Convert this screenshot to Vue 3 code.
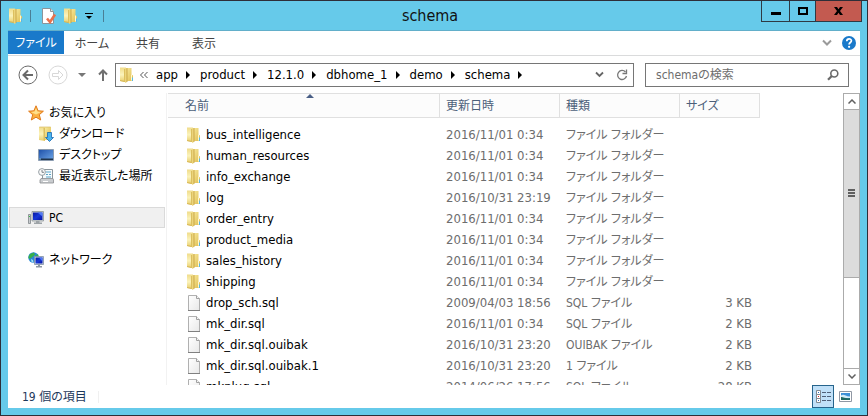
<script setup>
import { ref } from 'vue'

const search = ref('')
const path = ['app', 'product', '12.1.0', 'dbhome_1', 'demo', 'schema']
const tabs = ['ホーム', '共有', '表示']

const favorites = [
  { name: 'ダウンロード', icon: 'download' },
  { name: 'デスクトップ', icon: 'desktop' },
  { name: '最近表示した場所', icon: 'recent' }
]

const folder = 'ファイル フォルダー'
const files = [
  { name: 'bus_intelligence', date: '2016/11/01 0:34', type: folder, size: '' },
  { name: 'human_resources', date: '2016/11/01 0:34', type: folder, size: '' },
  { name: 'info_exchange', date: '2016/11/01 0:34', type: folder, size: '' },
  { name: 'log', date: '2016/10/31 23:19', type: folder, size: '' },
  { name: 'order_entry', date: '2016/11/01 0:34', type: folder, size: '' },
  { name: 'product_media', date: '2016/11/01 0:34', type: folder, size: '' },
  { name: 'sales_history', date: '2016/11/01 0:34', type: folder, size: '' },
  { name: 'shipping', date: '2016/11/01 0:34', type: folder, size: '' },
  { name: 'drop_sch.sql', date: '2009/04/03 18:56', type: 'SQL ファイル', size: '3 KB' },
  { name: 'mk_dir.sql', date: '2016/11/01 0:34', type: 'SQL ファイル', size: '2 KB' },
  { name: 'mk_dir.sql.ouibak', date: '2016/10/31 23:20', type: 'OUIBAK ファイル', size: '2 KB' },
  { name: 'mk_dir.sql.ouibak.1', date: '2016/10/31 23:20', type: '1 ファイル', size: '2 KB' },
  { name: 'mkplug.sql', date: '2014/06/26 17:56', type: 'SQL ファイル', size: '28 KB' }
]
</script>

<template>
  <svg class="sprite" width="0" height="0" aria-hidden="true">
    <defs>
      <linearGradient id="gold-back" x1="0" y1="0" x2="0" y2="1">
        <stop offset="0" stop-color="#f0dc8a" />
        <stop offset="0.5" stop-color="#fbf3bc" />
        <stop offset="1" stop-color="#e8cd6a" />
      </linearGradient>
      <linearGradient id="gold-front" x1="0" y1="0" x2="1" y2="1">
        <stop offset="0" stop-color="#f7e99c" />
        <stop offset="1" stop-color="#dfbd50" />
      </linearGradient>
      <linearGradient id="paper" x1="0" y1="0" x2="1" y2="1">
        <stop offset="0" stop-color="#ffffff" />
        <stop offset="1" stop-color="#e8e8e8" />
      </linearGradient>
      <linearGradient id="screen" x1="0" y1="0" x2="1" y2="1">
        <stop offset="0" stop-color="#1d4fa8" />
        <stop offset="1" stop-color="#70a8e8" />
      </linearGradient>
      <linearGradient id="screen-dark" x1="0" y1="0" x2="1" y2="1">
        <stop offset="0" stop-color="#0818a0" />
        <stop offset="0.5" stop-color="#1838d8" />
        <stop offset="1" stop-color="#0410a0" />
      </linearGradient>
    </defs>
    <symbol id="folder" viewBox="0 0 16 16">
      <path d="M1 .5h6V15l-6-1z" fill="url(#gold-back)" />
      <path d="M7 1h5.500v6.500l1.500 1V14H7z" fill="url(#gold-front)" />
      <path d="M1 13.200l5 .8v1l-5-1z" fill="#d2b04c" />
      <path d="M5 2h1v13l-1-.5z" fill="#dcc060" />
      <path d="M6 1.500h2V15l-2 1z" fill="#ecd57c" />
      <path d="M8 1v14" stroke="#c39d3a" stroke-width=".8" />
      <path d="M12 7.500h1v6h-1z" fill="#fff8d0" />
      <path d="M13 10.500h1V14h-1z" fill="#56b8e8" />
    </symbol>
    <symbol id="file" viewBox="0 0 16 16">
      <path d="M2.500.5h8l3 3v12h-11z" fill="url(#paper)" stroke="#b0b0b0" />
      <path d="M10.500.5v3h3" fill="#f4f4f4" stroke="#a0a0a0" />
      <path d="M2 15.500h12" stroke="#808080" />
    </symbol>
    <symbol id="star" viewBox="0 0 16 16">
      <path d="M8 .8l2.100 5 5.300.4-4.100 3.500 1.400 5.300L8 12.200 3.300 15l1.400-5.300L.6 6.200l5.300-.4z" fill="#fbb040" stroke="#e07a1c" />
      <path d="M8 3l1.400 3.600L13 7 8 9.500 3 7l3.600-.4z" fill="#ffe08a" />
    </symbol>
    <symbol id="download" viewBox="0 0 16 16">
      <path d="M1 1h6v14l-6-1z" fill="url(#gold-back)" />
      <path d="M7 1h6v13H7z" fill="url(#gold-front)" />
      <path d="M5.500 2h1.500v13l-1.500-1z" fill="#dcc060" />
      <path d="M1.300 1h11.400" stroke="#d3b355" stroke-width=".6" />
      <path d="M9.500 6.500h4v5h2l-4 4-4-4h2z" fill="#48b4f0" stroke="#1868b0" stroke-width=".8" />
    </symbol>
    <symbol id="desktop" viewBox="0 0 16 16">
      <path d="M.5 2.500h15v11H.5z" fill="url(#screen)" stroke="#8c9cb0" />
      <path d="M1 11.500h14v1.500H1z" fill="#20344c" />
      <path d="M1 12h2" stroke="#88c8f0" />
    </symbol>
    <symbol id="recent" viewBox="0 0 16 16">
      <path d="M4.500 1.500h10v10h-10z" fill="#f6fafc" stroke="#8c969c" />
      <path d="M8 4h5M8 6.500h2M11 6.500h2M8 9h5" stroke="#58a4c8" />
      <path d="M2 12l1-1.500h12l.5 1.500v3H2z" fill="#c9cccf" stroke="#8a8d90" stroke-width=".8" />
      <path d="M5 13.500h5" stroke="#fff" />
      <circle cx="4" cy="4" r="3.400" fill="#fafafa" stroke="#8a949a" stroke-width=".9" />
      <path d="M4 2v2.300h2" fill="none" stroke="#60686e" stroke-width=".8" />
    </symbol>
    <symbol id="pc" viewBox="0 0 16 16">
      <path d="M.5 4.500h2v9h-2z" fill="#c8cccf" stroke="#7f8589" stroke-width=".8" />
      <path d="M1 6.500h1" stroke="#30c040" />
      <path d="M4 1.500h11.500v9.500H4z" fill="#d5d9dc" stroke="#8d9498" stroke-width=".8" />
      <path d="M5 2.500h9.500v7.500H5z" fill="url(#screen-dark)" />
      <path d="M9.500 2.500h5v4z" fill="#5078f0" />
      <path d="M8 11h3.500v1.500H14V14H6v-1.500h2z" fill="#9da3a7" />
    </symbol>
    <symbol id="network" viewBox="0 0 16 16">
      <circle cx="5.500" cy="5.500" r="5.200" fill="#2888d8" />
      <path d="M2 2l4-1.500 1 2-2 2-2 1.500L1 7 .4 5zM7 4l3-2 .8 3-2.800 2z" fill="#38b048" />
      <path d="M3 7l2 1 .5 2.500-2-.8z" fill="#a8e0f0" />
      <path d="M6.500 4.500h9v8h-9z" fill="#d5dce4" stroke="#8090a4" stroke-width=".8" />
      <path d="M7.500 5.500h7v6h-7z" fill="url(#screen-dark)" />
      <path d="M11 5.500h3.500v4z" fill="#5078f0" />
      <path d="M10 12.500h2v1.500h2v1.500H8V14h2z" fill="#8c98a4" />
    </symbol>
    <symbol id="properties" viewBox="0 0 16 16">
      <path d="M1.500.5h8l3 3v12h-11z" fill="#fff" stroke="#8c9499" />
      <path d="M9.500.5v3h3" fill="#e4e8ea" stroke="#8c9499" />
      <path d="M6 10.500l3 3.500 5-7.500" fill="none" stroke="#e8714c" stroke-width="2.600" />
    </symbol>
  </svg>

  <div class="window">
    <header class="title-bar">
      <div class="quick">
        <svg class="icon"><use href="#folder" /></svg>
        <span class="bar"></span>
        <button type="button" aria-label="プロパティ"><svg class="icon"><use href="#properties" /></svg></button>
        <button type="button" aria-label="新しいフォルダー"><svg class="icon"><use href="#folder" /></svg></button>
        <button type="button" aria-label="カスタマイズ">
          <svg width="8" height="6" viewBox="0 0 8 6"><path d="M0 0h8v1H0zM1 3h6L4 6z" fill="#000" /></svg>
        </button>
        <span class="bar"></span>
      </div>
      <h1>schema</h1>
      <div class="controls">
        <button type="button" class="minimize" aria-label="最小化">
          <svg width="10" height="9" viewBox="0 0 10 9"><path d="M0 5h10v3H0z" /></svg>
        </button>
        <button type="button" class="maximize" aria-label="最大化">
          <svg width="10" height="8" viewBox="0 0 10 8"><path d="M0 0h10v8H0zM2 2v4h6V2z" fill-rule="evenodd" /></svg>
        </button>
        <button type="button" class="close" aria-label="閉じる">
          <svg width="9" height="8" viewBox="0 0 9 8"><path d="M0 0h3l1.500 2.200L6 0h3L6 4l3 4H6L4.500 5.800 3 8H0l3-4z" /></svg>
        </button>
      </div>
    </header>

    <main class="content">
      <nav class="ribbon">
        <button type="button" class="tab active">ファイル</button>
        <button v-for="tab in tabs" :key="tab" type="button" class="tab">{{ tab }}</button>
        <div class="ribbon-end">
          <button type="button" aria-label="リボンの展開">
            <svg width="10" height="8" viewBox="0 0 10 8"><path d="M1 1.500l4 4 4-4" fill="none" stroke="#9a9a9a" stroke-width="2" /></svg>
          </button>
          <button type="button" aria-label="ヘルプ">
            <svg width="14" height="14" viewBox="0 0 14 14">
              <circle cx="7" cy="7" r="7" fill="#1979ca" />
              <path d="M4.800 5.200c0-3 4.600-3 4.600-.4 0 1.700-2.300 1.700-2.300 3.700" fill="none" stroke="#fff" stroke-width="1.700" />
              <circle cx="7.100" cy="10.800" r="1.100" fill="#fff" />
            </svg>
          </button>
        </div>
      </nav>

      <div class="nav-bar">
        <div class="history">
          <button type="button" aria-label="戻る">
            <svg width="20" height="20" viewBox="0 0 20 20" fill="none" stroke="#6a6a6a">
              <circle cx="10" cy="10" r="9" />
              <path d="M15 10H6M10 5.500L5.500 10l4.500 4.500" stroke-width="2" />
            </svg>
          </button>
          <button type="button" class="forward" aria-label="進む">
            <svg width="20" height="20" viewBox="0 0 20 20" fill="none" stroke="#d8d8d8">
              <circle cx="10" cy="10" r="9" />
              <path d="M4.500 8.500h6v-3l4.500 4.500-4.500 4.500v-3h-6z" />
            </svg>
          </button>
          <button type="button" aria-label="最近の場所">
            <svg width="8" height="4" viewBox="0 0 8 4"><path d="M0 0h8L4 4z" fill="#777" /></svg>
          </button>
          <button type="button" class="up" aria-label="上へ">
            <svg width="10" height="12" viewBox="0 0 10 12"><path d="M5 12V2M1 5.500l4-4 4 4" fill="none" stroke="#707070" stroke-width="2" /></svg>
          </button>
        </div>
        <div class="address">
          <svg class="icon"><use href="#folder" /></svg>
          <svg class="overflow" width="8" height="6" viewBox="0 0 8 6"><path d="M3.500 0l-3 3 3 3M7.500 0l-3 3 3 3" fill="none" stroke="#555" /></svg>
          <template v-for="part in path" :key="part">
            <a href="#">{{ part }}</a>
            <svg class="arrow" width="4" height="8" viewBox="0 0 4 8"><path d="M0 0l4 4-4 4z" /></svg>
          </template>
          <div class="address-end">
            <button type="button" aria-label="以前の場所">
              <svg width="9" height="7" viewBox="0 0 9 7"><path d="M1 1.500L4.500 5 8 1.500" fill="none" stroke="#666" stroke-width="1.800" /></svg>
            </button>
            <button type="button" aria-label="最新の情報に更新">
              <svg width="12" height="12" viewBox="0 0 12 12">
                <path d="M9.500 3A4.500 4.500 0 1 0 10.500 7" fill="none" stroke="#777" stroke-width="1.300" />
                <path d="M6.500 4.500h4V.5" fill="none" stroke="#777" stroke-width="1.300" />
              </svg>
            </button>
          </div>
        </div>
        <label class="search">
          <input v-model="search" type="search" placeholder="schemaの検索" aria-label="schemaの検索" />
          <svg width="12" height="12" viewBox="0 0 12 12" fill="none" stroke="#6a6a6a">
            <circle cx="7.300" cy="4.500" r="3.500" stroke-width="1.600" />
            <path d="M4.800 7L1 10.800" stroke-width="2.200" />
          </svg>
        </label>
      </div>

      <div class="panes">
        <aside class="sidebar">
          <a href="#" class="place"><svg class="icon"><use href="#star" /></svg>お気に入り</a>
          <a v-for="item in favorites" :key="item.name" href="#" class="place child">
            <svg class="icon"><use :href="'#' + item.icon" /></svg>{{ item.name }}
          </a>
          <a href="#" class="place root selected"><svg class="icon"><use href="#pc" /></svg>PC</a>
          <a href="#" class="place root"><svg class="icon"><use href="#network" /></svg>ネットワーク</a>
        </aside>

        <div class="list">
          <table>
            <thead>
              <tr>
                <th class="col-name">
                  名前
                  <svg class="sort" width="8" height="4" viewBox="0 0 8 4"><path d="M4 0l4 4H0z" fill="#4a5f86" /></svg>
                </th>
                <th class="col-date">更新日時</th>
                <th class="col-type">種類</th>
                <th class="col-size">サイズ</th>
              </tr>
            </thead>
            <tbody>
              <tr v-for="file in files" :key="file.name">
                <td>
                  <div class="file-name">
                    <svg class="icon"><use :href="file.size ? '#file' : '#folder'" /></svg>
                    {{ file.name }}
                  </div>
                </td>
                <td>{{ file.date }}</td>
                <td class="type">{{ file.type }}</td>
                <td class="size">{{ file.size }}</td>
              </tr>
            </tbody>
          </table>
        </div>

        <div class="scrollbar">
          <button type="button" aria-label="上にスクロール">
            <svg width="8" height="5" viewBox="0 0 8 5"><path d="M.5 4.500L4 1l3.500 3.500" fill="none" stroke="#606060" stroke-width="1.500" /></svg>
          </button>
          <div class="track"><div class="thumb"><i></i><i></i><i></i></div></div>
          <button type="button" aria-label="下にスクロール">
            <svg width="8" height="5" viewBox="0 0 8 5"><path d="M.5.5L4 4 7.500.5" fill="none" stroke="#606060" stroke-width="1.500" /></svg>
          </button>
        </div>
      </div>

      <footer class="status">
        <span class="count">19 個の項目</span>
        <div class="views">
          <button type="button" class="view current" aria-label="詳細">
            <svg width="15" height="13" viewBox="0 0 15 13">
              <path d="M.5.5h4v4h-4zM.5 4.500h4v4h-4zM.5 8.500h4v4h-4z" fill="#fff" stroke="#808890" />
              <path d="M2 2h1v1H2z" fill="#3070c0" />
              <path d="M2 6h1v1H2z" fill="#e02020" />
              <path d="M2 10h1v1H2z" fill="#3070c0" />
              <path d="M6 2.500h4M11 2.500h4M6 6.500h4M11 6.500h4M6 10.500h4M11 10.500h4" stroke="#506078" />
            </svg>
          </button>
          <button type="button" class="view" aria-label="大アイコン">
            <svg width="13" height="11" viewBox="0 0 13 11">
              <path d="M.5.5h12v10H.5z" fill="#fff" stroke="#9098a4" />
              <path d="M2 2h9v7H2z" fill="#3c90d8" />
              <path d="M2 4.500c3-2 4 1 9 1V7H2z" fill="#d4ecf8" />
              <path d="M2 6c3 0 5 2 9 1v2H2z" fill="#206860" />
            </svg>
          </button>
        </div>
      </footer>
    </main>
  </div>
</template>

<style>
body {
  margin: 0;
}
</style>

<style scoped>
.sprite {
  position: absolute;
}

.window {
  box-sizing: border-box;
  height: 100vh;
  display: flex;
  flex-direction: column;
  padding: 0 7px 7px;
  border: 1px solid #2e2e38;
  background: #66caea;
  font-family: 'DejaVu Sans Condensed', 'Noto Sans', 'Noto Sans CJK JP', sans-serif;
  font-size: 13px;
  line-height: 20px;
  color: #000;
  font-feature-settings: 'palt';
}

button {
  display: flex;
  align-items: center;
  justify-content: center;
  padding: 0;
  border: 0;
  background: none;
  font: inherit;
  color: inherit;
}

a {
  color: inherit;
  text-decoration: none;
}

.icon {
  width: 16px;
  height: 16px;
  flex: none;
}

/* title bar */
.title-bar {
  box-sizing: border-box;
  display: grid;
  grid-template-columns: 1fr auto 1fr;
  height: 30px;
  flex: none;
  border-bottom: 1px solid #62afca;
}

.quick {
  display: flex;
  align-items: center;
  gap: 6px;
}

.quick .bar {
  width: 1px;
  height: 12px;
  margin: 0 4px 0 0;
  background: #4a7f96;
}

.quick .icon {
  display: block;
}

.quick .bar:last-child {
  margin-left: 4px;
}

h1 {
  margin: 0;
  padding-right: 8px;
  font-size: 16px;
  font-weight: normal;
  line-height: 30px;
  color: #111;
}

.controls {
  display: flex;
  justify-self: end;
  height: 20px;
  border: 1px solid #2e3a44;
  border-top: 0;
  margin-right: -2px;
}

.controls button {
  width: 26px;
}

.controls .minimize {
  width: 27px;
}

.controls button + button {
  border-left: 1px solid #2e3a44;
}

.controls .close {
  width: 46px;
  background: #c35a50;
}

/* content */
.content {
  flex: 1;
  min-height: 0;
  display: flex;
  flex-direction: column;
  background: #fff;
}

.ribbon {
  display: flex;
  height: 24px;
  flex: none;
  font-size: 12px;
  color: #444;
  border-bottom: 1px solid #dadbdc;
}

.tab {
  width: 56px;
  padding-top: 1px;
}

.tab.active {
  height: 23px;
  background: #1979ca;
  color: #fff;
}

.ribbon-end {
  display: flex;
  gap: 10px;
  margin-left: auto;
  padding-right: 4px;
}

.nav-bar {
  display: flex;
  align-items: center;
  gap: 11px;
  height: 37px;
  flex: none;
  padding: 0 11px 0 10px;
}

.history {
  display: flex;
  align-items: center;
  gap: 10px;
}

.history .up {
  margin-left: 2px;
  margin-right: -4px;
}

.address,
.search {
  box-sizing: border-box;
  display: flex;
  align-items: center;
  height: 24px;
  border: 1px solid #767676;
}

.address {
  flex: 1;
  gap: 8px;
  padding: 0 5px 0 3px;
}

.address .icon {
  margin-right: -3px;
}

.address .arrow {
  margin-right: 2px;
}

.address-end {
  display: flex;
  gap: 12px;
  margin-left: auto;
}

.search {
  width: 204px;
  padding: 0 9px 0 10px;
}

.search input {
  flex: 1;
  min-width: 0;
  padding: 0;
  border: 0;
  outline: 0;
  background: none;
  font: inherit;
  font-size: 12px;
  font-feature-settings: inherit;
}

.search input::placeholder {
  color: #6d6d6d;
}

/* panes */
.panes {
  flex: 1;
  min-height: 0;
  display: flex;
}

.sidebar {
  box-sizing: border-box;
  width: 159px;
  flex: none;
  padding: 9px 1px 0;
  border-right: 1px solid #f2f2f2;
  font-size: 12px;
}

.place {
  box-sizing: border-box;
  display: flex;
  align-items: center;
  gap: 5px;
  height: 21px;
  padding-left: 19px;
}

.place.child {
  padding-left: 29px;
}

.place.root {
  margin-top: 21px;
}

.place.selected {
  background: #f0f0f0;
  box-shadow: inset 0 0 0 1px #dadada;
}

.list {
  flex: 1;
  min-width: 0;
  margin-left: 1px;
  overflow: hidden;
}

table {
  table-layout: fixed;
  width: 592px;
  border-spacing: 0;
}

th {
  position: relative;
  box-sizing: border-box;
  height: 25px;
  padding: 0 0 0 6px;
  border: solid #e0e0e0;
  border-width: 1px 1px 1px 0;
  background: #fcfcfc;
  font-size: 12px;
  font-weight: normal;
  text-align: left;
  color: #4c607a;
}

.col-name {
  width: 272px;
  padding-left: 17px;
}

.col-date,
.col-type {
  width: 120px;
}

.sort {
  position: absolute;
  top: 0;
  left: 51%;
}

tbody::before {
  content: '';
  display: block;
  height: 6px;
}

td {
  height: 21px;
  padding: 0 0 0 6px;
  color: #6d6d6d;
  white-space: nowrap;
}

.file-name {
  display: flex;
  align-items: center;
  gap: 4px;
  padding-left: 12px;
  color: #000;
}

.type {
  font-size: 12px;
}

.size {
  padding: 0 8px 0 0;
  text-align: right;
}

.scrollbar {
  width: 17px;
  flex: none;
  display: flex;
  flex-direction: column;
}

.scrollbar button {
  box-sizing: border-box;
  height: 17px;
  border: 1px solid #ababab;
}

.track {
  flex: 1;
  border: solid #ababab;
  border-width: 0 1px;
}

.thumb {
  box-sizing: border-box;
  height: 65%;
  display: flex;
  flex-direction: column;
  align-items: center;
  justify-content: center;
  gap: 1px;
  border-bottom: 1px solid #ababab;
  background: #dcdcdc;
}

.thumb i {
  width: 7px;
  height: 2px;
  background: #606060;
}

/* status bar */
.status {
  display: flex;
  align-items: center;
  height: 23px;
  flex: none;
  font-size: 12px;
  color: #1e395b;
}

.count {
  padding: 0 11px 0 14px;
  border-right: 1px solid #f0f0f0;
  line-height: 12px;
}

.views {
  display: flex;
  margin-left: auto;
  padding-right: 4px;
}

.view {
  box-sizing: border-box;
  width: 22px;
  height: 23px;
}

.view.current {
  border: 1px solid #26648c;
  background: #c0e0f8;
}
</style>
